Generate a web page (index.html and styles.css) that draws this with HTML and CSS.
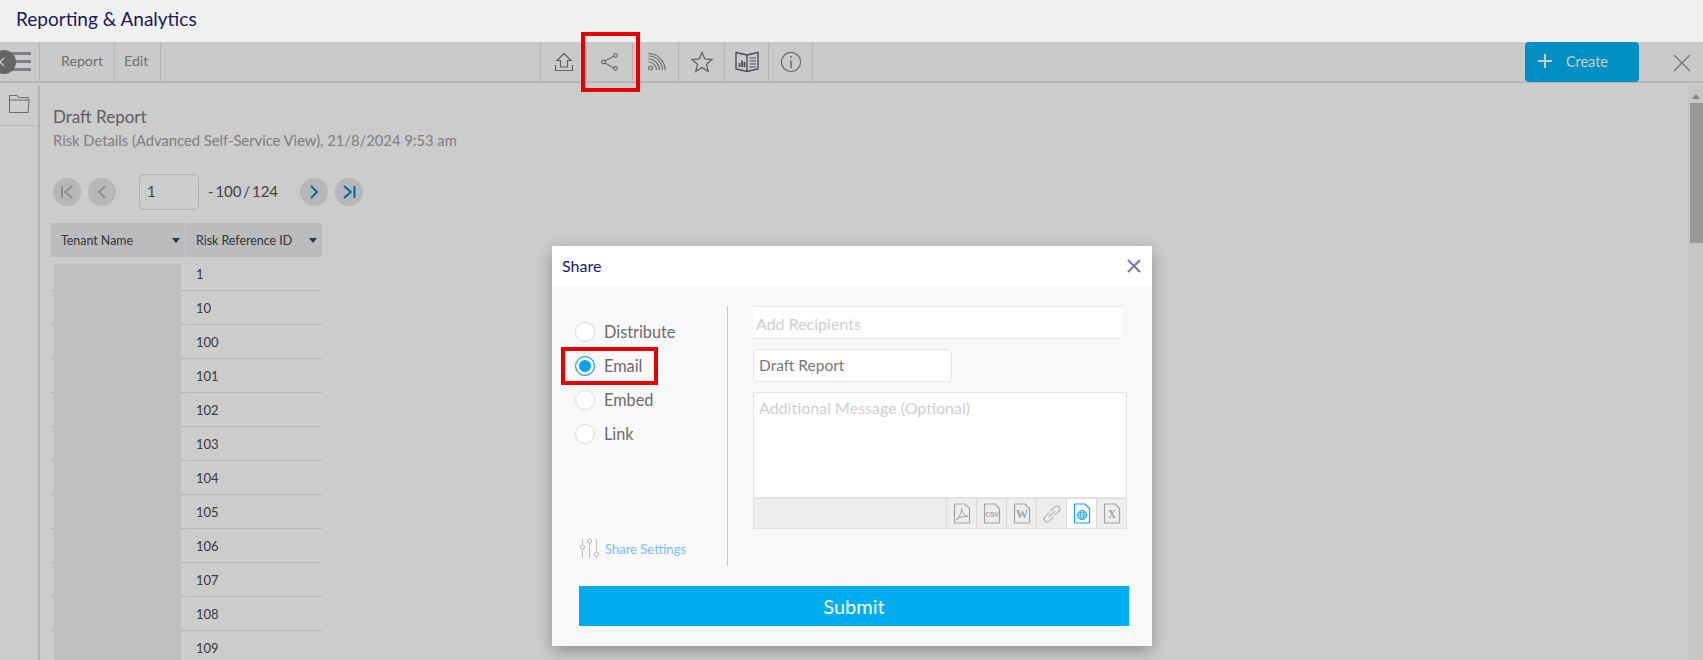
FILE: index.html
```html
<!DOCTYPE html>
<html lang="en">
<head>
  <meta charset="UTF-8">
  <meta name="viewport" content="width=device-width, initial-scale=1.0">
  <title>Reporting &amp; Analytics</title>
  <link rel="stylesheet" href="styles.css">
</head>
<body>
  <header class="topbar">Reporting &amp; Analytics</header>

  <div class="page">
    <div class="toolbar">
      <div class="menu-cell">
        <span class="menu-line"></span>
        <span class="menu-line"></span>
        <span class="menu-line"></span>
      </div>
      <div class="text-cell report-cell">Report</div>
      <div class="text-cell edit-cell">Edit</div>

      <div class="tools">
        <div class="tool">
          <svg width="24" height="24" viewBox="0 0 24 24" fill="none" stroke="#7d7d7d" stroke-width="1.2">
            <path d="M12 3.5 L19 10.5 H15.5 V17 H8.5 V10.5 H5 Z"/>
            <path d="M3.5 15 V20.5 H20.5 V15"/>
          </svg>
        </div>
        <div class="tool">
          <svg width="24" height="24" viewBox="0 0 24 24" fill="none" stroke="#8a8a8a" stroke-width="1.2">
            <path d="M7 11 L16 6 M7 13 L16 18"/>
            <circle cx="5.5" cy="12" r="1.8"/>
            <circle cx="17.5" cy="5.5" r="1.8"/>
            <circle cx="17.5" cy="18.5" r="1.8"/>
          </svg>
        </div>
        <div class="tool">
          <svg width="24" height="24" viewBox="0 0 24 24" fill="none" stroke="#8d8d8d" stroke-width="1.2">
            <circle cx="6.5" cy="18" r="2"/>
            <path d="M4.5 12 A8 8 0 0 1 12.5 20"/>
            <path d="M4.5 9 A11 11 0 0 1 15.5 20"/>
            <path d="M4.5 6 A14 14 0 0 1 18.5 20"/>
            <path d="M4.5 3.5 A16.5 16.5 0 0 1 21 20"/>
          </svg>
        </div>
        <div class="tool">
          <svg width="24" height="24" viewBox="0 0 24 24" fill="none" stroke="#7d7d85" stroke-width="1.3">
            <path d="M12 2.5 L14.8 9 L22 9.6 L16.5 14.3 L18.2 21.3 L12 17.6 L5.8 21.3 L7.5 14.3 L2 9.6 L9.2 9 Z"/>
          </svg>
        </div>
        <div class="tool tool-narrow">
          <svg width="26" height="24" viewBox="0 0 26 24" fill="none" stroke="#5f6273" stroke-width="1.4">
            <path d="M13 5 L2 2.5 V19 L13 21.5 L24 19 V2.5 Z"/>
            <path d="M13 5 V21.5"/>
            <path d="M15.5 8 H22 M15.5 11 H22 M15.5 14 H22 M15.5 17 H22" stroke-width="1.2"/>
            <path d="M5.5 17 V13 M8 17 V10.5 M10.5 17 V12" stroke-width="1.8"/>
          </svg>
        </div>
        <div class="tool tool-narrow">
          <svg width="24" height="24" viewBox="0 0 24 24" fill="none" stroke="#8a8a8a" stroke-width="1.2">
            <circle cx="12" cy="12" r="9.6"/>
            <path d="M12 10.5 V18" stroke-width="1.6"/>
            <circle cx="12" cy="7" r="1" fill="#8a8a8a" stroke="none"/>
          </svg>
        </div>
      </div>

      <button class="create-btn">
        <svg width="16" height="16" viewBox="0 0 16 16" stroke="#fff" stroke-width="2"><path d="M8 1 V15 M1 8 H15"/></svg>
        <span>Create</span>
      </button>
      <svg class="close-page" width="18" height="18" viewBox="0 0 18 18" stroke="#8f8f8f" stroke-width="1.1"><path d="M1 1 L17 17 M17 1 L1 17"/></svg>
    </div>

    <div class="main">
      <aside class="sidebar">
        <div class="folder-cell">
          <svg width="22" height="20" viewBox="0 0 22 20" fill="none" stroke="#8a8a8a" stroke-width="1.1">
            <path d="M1.5 6 V1.5 H9 L11 3.5 H20 V6"/>
            <path d="M1.5 6 H21 L20 18.5 H1.5 Z"/>
          </svg>
        </div>
      </aside>

      <section class="report">
        <h1 class="report-title">Draft Report</h1>
        <p class="report-sub">Risk Details (Advanced Self-Service View), 21/8/2024 9:53 am</p>

        <div class="pager">
          <span class="page-btn">
            <svg width="16" height="16" viewBox="0 0 16 16" fill="none" stroke="#aeb1b5" stroke-width="1.8"><path d="M3 2 V14 M13 2 L6 8 L13 14"/></svg>
          </span>
          <span class="page-btn">
            <svg width="16" height="16" viewBox="0 0 16 16" fill="none" stroke="#aeb1b5" stroke-width="1.8"><path d="M11 2 L5 8 L11 14"/></svg>
          </span>
          <span class="page-input">1</span>
          <span class="page-count">- 100 / 124</span>
          <span class="page-btn">
            <svg width="16" height="16" viewBox="0 0 16 16" fill="none" stroke="#0a84c0" stroke-width="2"><path d="M5 2 L11 8 L5 14"/></svg>
          </span>
          <span class="page-btn">
            <svg width="16" height="16" viewBox="0 0 16 16" fill="none" stroke="#0a84c0" stroke-width="2"><path d="M3 2 L10 8 L3 14 M13.5 2 V14"/></svg>
          </span>
        </div>

        <div class="grid">
          <div class="head-cell">Tenant Name<span class="sort"></span></div>
          <div class="head-cell">Risk Reference ID<span class="sort"></span></div>
          <div class="cell"></div><div class="cell">1</div>
          <div class="cell"></div><div class="cell">10</div>
          <div class="cell"></div><div class="cell">100</div>
          <div class="cell"></div><div class="cell">101</div>
          <div class="cell"></div><div class="cell">102</div>
          <div class="cell"></div><div class="cell">103</div>
          <div class="cell"></div><div class="cell">104</div>
          <div class="cell"></div><div class="cell">105</div>
          <div class="cell"></div><div class="cell">106</div>
          <div class="cell"></div><div class="cell">107</div>
          <div class="cell"></div><div class="cell">108</div>
          <div class="cell"></div><div class="cell">109</div>
          <div class="blur-block"></div>
        </div>
      </section>

      <div class="scrollbar">
        <span class="scroll-arrow"></span>
        <span class="scroll-thumb"></span>
      </div>
    </div>

    <span class="collapse-badge">
      <svg width="8" height="10" viewBox="0 0 8 10" fill="none" stroke="#fff" stroke-width="1.4"><path d="M6 1 L2 5 L6 9"/></svg>
    </span>
    <div class="overlay"></div>
  </div>

  <div class="hilite hilite-share"></div>

  <div class="modal">
    <div class="modal-head">
      <span class="modal-title">Share</span>
      <svg width="16" height="16" viewBox="0 0 16 16" stroke="#8178b9" stroke-width="2.2"><path d="M2 2 L14 14 M14 2 L2 14"/></svg>
    </div>
    <div class="modal-body">
      <div class="share-cols">
        <div class="share-left">
          <div class="radios">
            <label class="radio-row"><span class="radio"></span>Distribute</label>
            <label class="radio-row"><span class="radio radio-on"></span>Email</label>
            <label class="radio-row"><span class="radio"></span>Embed</label>
            <label class="radio-row"><span class="radio"></span>Link</label>
          </div>
          <a class="settings-link">
            <svg width="22" height="22" viewBox="0 0 22 22" fill="none" stroke="#c4c4c4" stroke-width="1.1">
              <path d="M2.5 1 V7 M2.5 11 V20 M9.5 5 V20 M16.5 1 V14 M16.5 18 V20"/>
              <circle cx="2.5" cy="9" r="2"/>
              <circle cx="9.5" cy="3" r="2"/>
              <circle cx="16.5" cy="16" r="2"/>
            </svg>
            Share Settings
          </a>
        </div>

        <div class="share-right">
          <div class="recipients">Add Recipients</div>
          <div class="subject">Draft Report</div>
          <div class="message">Additional Message (Optional)</div>
          <div class="formats">
            <span class="format">
              <svg width="18" height="21" viewBox="0 0 18 21" fill="none" stroke="#a3a3a3" stroke-width="1.2">
                <path d="M2.5 1 H12 L16.5 5.5 V19 Q16.5 20 15.5 20 H2.5 Q1.5 20 1.5 19 V2 Q1.5 1 2.5 1 Z"/>
                <path d="M3 17 C6 15 9 9 8.5 5 C9 10 12 13 15 13.5 C11 13 6 14 3 17 Z" stroke-width="1"/>
              </svg>
            </span>
            <span class="format">
              <svg width="18" height="21" viewBox="0 0 18 21" fill="none" stroke="#a3a3a3" stroke-width="1.2">
                <path d="M2.5 1 H12 L16.5 5.5 V19 Q16.5 20 15.5 20 H2.5 Q1.5 20 1.5 19 V2 Q1.5 1 2.5 1 Z"/>
                <text x="9" y="14" class="format-text" text-anchor="middle">CSV</text>
              </svg>
            </span>
            <span class="format">
              <svg width="18" height="21" viewBox="0 0 18 21" fill="none" stroke="#a3a3a3" stroke-width="1.2">
                <path d="M2.5 1 H12 L16.5 5.5 V19 Q16.5 20 15.5 20 H2.5 Q1.5 20 1.5 19 V2 Q1.5 1 2.5 1 Z"/>
                <text x="9" y="15" class="format-letter" text-anchor="middle">W</text>
              </svg>
            </span>
            <span class="format">
              <svg width="20" height="20" viewBox="0 0 20 20" fill="none" stroke="#bdbdbd" stroke-width="1.5">
                <path d="M8.5 7 L13 2.8 Q14.8 1.2 16.6 2.8 L17.4 3.6 Q18.8 5.4 17.2 7 L12.5 11.3"/>
                <path d="M11.5 13 L7 17.2 Q5.2 18.8 3.4 17.2 L2.6 16.4 Q1.2 14.6 2.8 13 L7.5 8.7"/>
                <path d="M7 13 L13 7"/>
              </svg>
            </span>
            <span class="format format-on">
              <svg width="18" height="21" viewBox="0 0 18 21" fill="none" stroke="#0ea5e9" stroke-width="1.2">
                <path d="M2.5 1 H12 L16.5 5.5 V19 Q16.5 20 15.5 20 H2.5 Q1.5 20 1.5 19 V2 Q1.5 1 2.5 1 Z"/>
                <circle cx="9" cy="12" r="4.6" stroke-width="1"/>
                <ellipse cx="9" cy="12" rx="2" ry="4.6" stroke-width=".9"/>
                <path d="M4.4 12 H13.6 M5 9.8 H13 M5 14.2 H13" stroke-width=".9"/>
              </svg>
            </span>
            <span class="format">
              <svg width="18" height="21" viewBox="0 0 18 21" fill="none" stroke="#a3a3a3" stroke-width="1.2">
                <path d="M2.5 1 H12 L16.5 5.5 V19 Q16.5 20 15.5 20 H2.5 Q1.5 20 1.5 19 V2 Q1.5 1 2.5 1 Z"/>
                <text x="9" y="15" class="format-letter" text-anchor="middle">X</text>
              </svg>
            </span>
          </div>
        </div>
      </div>
      <button class="submit-btn">Submit</button>
    </div>
  </div>

  <div class="hilite hilite-email"></div>
</body>
</html>
```

FILE: styles.css
```css
* {
  box-sizing: border-box;
}
html, body {
  height: 100%;
}
body {
  margin: 0;
  font-family: Lato, "Open Sans", sans-serif;
  background-color: #fff;
  overflow: hidden;
  position: relative;
  color: #555;
}
.topbar {
  height: 42px;
  background-color: #f0f0f0;
  color: #1a1a5c;
  font-size: 19px;
  line-height: 37px;
  padding-left: 16px;
}
.page {
  position: relative;
  height: 618px;
  overflow: hidden;
}
.overlay {
  position: absolute;
  inset: 0;
  background-color: rgba(0, 0, 0, 0.2);
}

/* toolbar */
.toolbar {
  height: 41px;
  display: flex;
  align-items: stretch;
  border-bottom: 2px solid #e3e3e3;
  background-color: #fdfdfd;
}
.menu-cell {
  width: 40px;
  display: flex;
  flex-direction: column;
  justify-content: center;
  gap: 5px;
  padding-left: 11px;
  border-right: 1px solid #e3e3e3;
}
.menu-line {
  width: 20px;
  height: 3px;
  background-color: #9ba0ad;
}
.text-cell {
  font-size: 14.2px;
  color: #8c8c8c;
  line-height: 38px;
  border-right: 1px solid #e3e3e3;
}
.report-cell {
  width: 75px;
  padding-left: 21px;
}
.edit-cell {
  width: 46px;
  padding-left: 9px;
}
.tools {
  display: flex;
  margin-left: 379px;
  border-left: 1px solid #e3e3e3;
}
.tool {
  width: 46px;
  display: flex;
  align-items: center;
  justify-content: center;
  border-right: 1px solid #e3e3e3;
}
.tool-narrow {
  width: 44px;
}
.create-btn {
  margin-left: 712px;
  width: 114px;
  height: 40px;
  border: none;
  border-radius: 4px;
  background-color: #00b3f4;
  color: #fff;
  font-family: inherit;
  font-size: 14.4px;
  display: flex;
  align-items: center;
  gap: 13px;
  padding: 0 0 2px 12px;
}
.close-page {
  margin: 12px 0 0 34px;
}
.collapse-badge {
  position: absolute;
  left: -8px;
  top: 8px;
  width: 24px;
  height: 24px;
  border-radius: 50%;
  background-color: #7f7f7f;
  display: flex;
  align-items: center;
  justify-content: center;
  padding-right: 5px;
}

/* main */
.main {
  display: flex;
  height: 577px;
  position: relative;
}
.sidebar {
  width: 40px;
  margin-top: 3px;
  border-right: 2px solid #dcdcdc;
  flex-shrink: 0;
}
.folder-cell {
  height: 40px;
  border-bottom: 1px solid #e3e3e3;
  padding: 8px 0 0 8px;
  margin-right: -2px;
}
.report {
  flex: 1;
  padding: 23px 0 0 13px;
}
.report-title {
  margin: 0;
  font-size: 17px;
  font-weight: 400;
  line-height: 22px;
  color: #777;
}
.report-sub {
  margin: 2px 0 0;
  font-size: 14.75px;
  line-height: 20px;
  color: #a0a0a0;
}
.pager {
  display: flex;
  align-items: center;
  margin-top: 24px;
  height: 36px;
}
.page-btn {
  width: 28px;
  height: 28px;
  margin-top: -1px;
  border-radius: 50%;
  background-color: #e3e5e8;
  display: flex;
  align-items: center;
  justify-content: center;
  margin-right: 7px;
}
.page-input {
  width: 60px;
  height: 36px;
  margin-left: 16px;
  border: 1px solid #d8dbe0;
  border-radius: 5px;
  padding-left: 7px;
  font-size: 15px;
  line-height: 32px;
  color: #555;
}
.page-count {
  width: 92px;
  margin: -2px 0 0 9px;
  font-size: 15px;
  word-spacing: -2px;
  color: #555;
}
.grid {
  position: relative;
  margin: 13px 0 0 -2px;
  display: grid;
  grid-template-columns: 134px 136px;
  column-gap: 1px;
  width: 271px;
}
.head-cell {
  height: 34px;
  background-color: #eaebed;
  color: #444;
  font-size: 12.4px;
  line-height: 36px;
  padding-left: 10px;
  position: relative;
}
.sort {
  position: absolute;
  right: 5px;
  top: 15px;
  border-left: 4px solid transparent;
  border-right: 4px solid transparent;
  border-top: 5px solid #34495e;
}
.cell {
  height: 34px;
  border-bottom: 1px solid #e3e3e3;
  font-size: 13px;
  line-height: 34px;
  padding-left: 10px;
  color: #4a4a4a;
}
.blur-block {
  position: absolute;
  left: 3px;
  top: 41px;
  width: 127px;
  height: 420px;
  background-color: #efefed;
}
.scrollbar {
  position: absolute;
  right: 0;
  top: 3px;
  width: 15px;
  height: 100%;
  background-color: #f8f8f8;
}
.scroll-arrow {
  position: absolute;
  left: 4px;
  top: 8px;
  border-left: 4px solid transparent;
  border-right: 4px solid transparent;
  border-bottom: 5px solid #a8a8a8;
}
.scroll-thumb {
  position: absolute;
  left: 2px;
  right: 0;
  top: 17px;
  height: 140px;
  background-color: #bfbfbf;
}

/* share dialog */
.modal {
  position: absolute;
  left: 552px;
  top: 246px;
  width: 600px;
  height: 400px;
  background-color: #f8f8f8;
  box-shadow: 0 5px 15px rgba(0, 0, 0, 0.3);
}
.modal-head {
  height: 40px;
  background-color: #fff;
  display: flex;
  align-items: center;
  justify-content: space-between;
  padding: 0 10px;
}
.modal-title {
  font-size: 16px;
  margin-top: -2px;
  color: #17177a;
}
.modal-body {
  padding: 20px 23px 0 27px;
}
.share-cols {
  display: flex;
  height: 260px;
}
.share-left {
  width: 149px;
  border-right: 1px solid #c8c8c8;
  display: flex;
  flex-direction: column;
  justify-content: space-between;
  padding-top: 8px;
}
.radios {
  display: flex;
  flex-direction: column;
}
.radio-row {
  height: 34px;
  display: flex;
  align-items: center;
  gap: 9px;
  font-size: 16.3px;
  color: #6c6c6c;
}
.radio {
  width: 20px;
  height: 20px;
  border-radius: 50%;
  background-color: #fff;
  border: 1px solid #dcdcdc;
  margin: 2px 0 0 -4px;
}
.radio-on {
  border-color: #1ba1e2;
  background-color: #00a2ed;
  box-shadow: inset 0 0 0 3px #fff;
}
.settings-link {
  display: flex;
  align-items: center;
  gap: 3px;
  margin: 0 0 6px 1px;
  font-size: 13px;
  color: #7cc0f0;
}
.share-right {
  margin-left: 25px;
  width: 374px;
}
.recipients {
  width: 369px;
  height: 33px;
  background-color: #fff;
  border-top: 1px solid #e5e5e5;
  border-bottom: 1px solid #e5e5e5;
  padding-left: 3px;
  font-size: 16px;
  line-height: 33px;
  color: #cfcfcf;
}
.subject {
  width: 199px;
  height: 33px;
  margin-top: 10px;
  background-color: #fff;
  border: 1px solid #e5e5e5;
  border-radius: 4px;
  padding-left: 5px;
  font-size: 15.5px;
  line-height: 31px;
  color: #777;
}
.message {
  height: 106px;
  margin-top: 10px;
  background-color: #fff;
  border: 1px solid #e5e5e5;
  padding: 6px 5px;
  font-size: 16px;
  line-height: 18px;
  color: #cfcfcf;
}
.formats {
  height: 31px;
  background-color: #eeeeee;
  border: 1px solid #e0e0e0;
  border-top: 1px solid #dedede;
  display: flex;
  justify-content: flex-end;
}
.format {
  width: 30px;
  display: flex;
  align-items: center;
  justify-content: center;
  border-left: 1px solid #d8d8d8;
}
.format-on {
  background-color: #fff;
}
.format-text {
  font-family: "Liberation Sans", sans-serif;
  font-size: 6.5px;
  font-weight: 700;
  fill: #a3a3a3;
  stroke: none;
}
.format-letter {
  font-family: "Liberation Serif", serif;
  font-size: 12px;
  font-weight: 700;
  fill: #a3a3a3;
  stroke: none;
}
.submit-btn {
  display: block;
  width: 550px;
  height: 40px;
  margin-top: 20px;
  border: none;
  background-color: #00aeef;
  color: #fff;
  font-family: inherit;
  font-size: 20px;
}

/* red call-out boxes */
.hilite {
  position: absolute;
  border: 4px solid #e60000;
}
.hilite-share {
  left: 581px;
  top: 32px;
  width: 59px;
  height: 60px;
}
.hilite-email {
  left: 561px;
  top: 347px;
  width: 97px;
  height: 38px;
}
```
